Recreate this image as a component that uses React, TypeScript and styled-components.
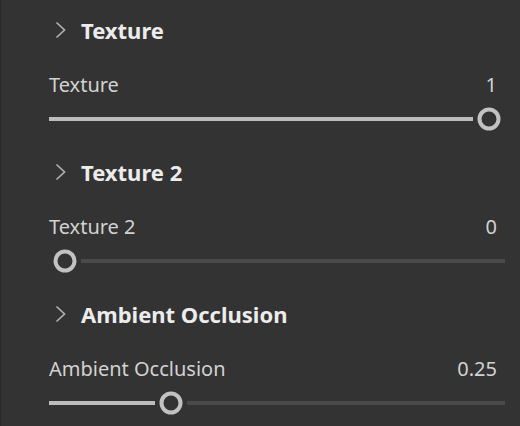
import React from "react";
import styled, { createGlobalStyle } from "styled-components";

const Global = createGlobalStyle`
  html, body { margin: 0; padding: 0; background: #333333; }
  body { font-family: "Noto Sans", "Open Sans", "DejaVu Sans", sans-serif; }
`;

const Panel = styled.div`
  width: 520px;
  height: 426px;
  box-sizing: border-box;
  background: #333333;
  border-left: 1px solid #2a2a2a;
  padding: 12px 15px 0 48px;
  display: flex;
  flex-direction: column;
  overflow: hidden;
`;

const Section = styled.div`
  display: flex;
  flex-direction: column;
  height: 142px;
  flex-shrink: 0;
`;

const Header = styled.div`
  height: 36px;
  display: flex;
  align-items: center;
  gap: 15px;
  padding-left: 6px;
  color: #ececec;
  font-weight: 700;
  font-size: 22px;
`;

const Chevron = styled.svg`
  width: 11px;
  height: 18px;
  flex-shrink: 0;
`;

const LabelRow = styled.div`
  margin-top: 24px;
  height: 24px;
  display: flex;
  align-items: center;
  justify-content: space-between;
  color: #d2d2d2;
  font-size: 20px;
  padding-right: 8px;
`;

const SliderRow = styled.div`
  margin-top: 11px;
  height: 24px;
  position: relative;
  display: flex;
  align-items: center;
`;

const Track = styled.div`
  width: 100%;
  height: 4px;
  display: flex;
`;

const Fill = styled.div`
  height: 100%;
  background: #bdbdbd;
  flex-shrink: 0;
`;

const Spacer = styled.div`
  flex-shrink: 0;
`;

const Rest = styled.div`
  height: 100%;
  flex: 1;
  background: #4a4a4a;
`;

const Thumb = styled.div`
  position: absolute;
  top: 50%;
  width: 23px;
  height: 23px;
  box-sizing: border-box;
  border-radius: 50%;
  border: 4px solid #c2c2c2;
  background: #333333;
  transform: translate(-50%, -50%);
`;

const TRACK = 456;
const INSET = 16;
const HALF_GAP = 16;

function Slider({ value }: { value: number }) {
  const x = INSET + value * (TRACK - 2 * INSET);
  const fillW = Math.max(0, x - HALF_GAP);
  const restStart = x + HALF_GAP;
  return (
    <SliderRow>
      <Track>
        <Fill style={{ width: fillW }} />
        <Spacer style={{ width: restStart - fillW }} />
        <Rest />
      </Track>
      <Thumb style={{ left: x }} />
    </SliderRow>
  );
}

const items = [
  { title: "Texture", value: 1, text: "1" },
  { title: "Texture 2", value: 0, text: "0" },
  { title: "Ambient Occlusion", value: 0.25, text: "0.25" },
];

export default function App() {
  return (
    <>
      <Global />
      <Panel>
        {items.map((it) => (
          <Section key={it.title}>
            <Header>
              <Chevron viewBox="0 0 11 18">
                <path d="M1.5 1.5 L9.5 9 L1.5 16.5" fill="none" stroke="#b0b0b0" strokeWidth="1.7" />
              </Chevron>
              <span>{it.title}</span>
            </Header>
            <LabelRow>
              <span>{it.title}</span>
              <span>{it.text}</span>
            </LabelRow>
            <Slider value={it.value} />
          </Section>
        ))}
      </Panel>
    </>
  );
}
